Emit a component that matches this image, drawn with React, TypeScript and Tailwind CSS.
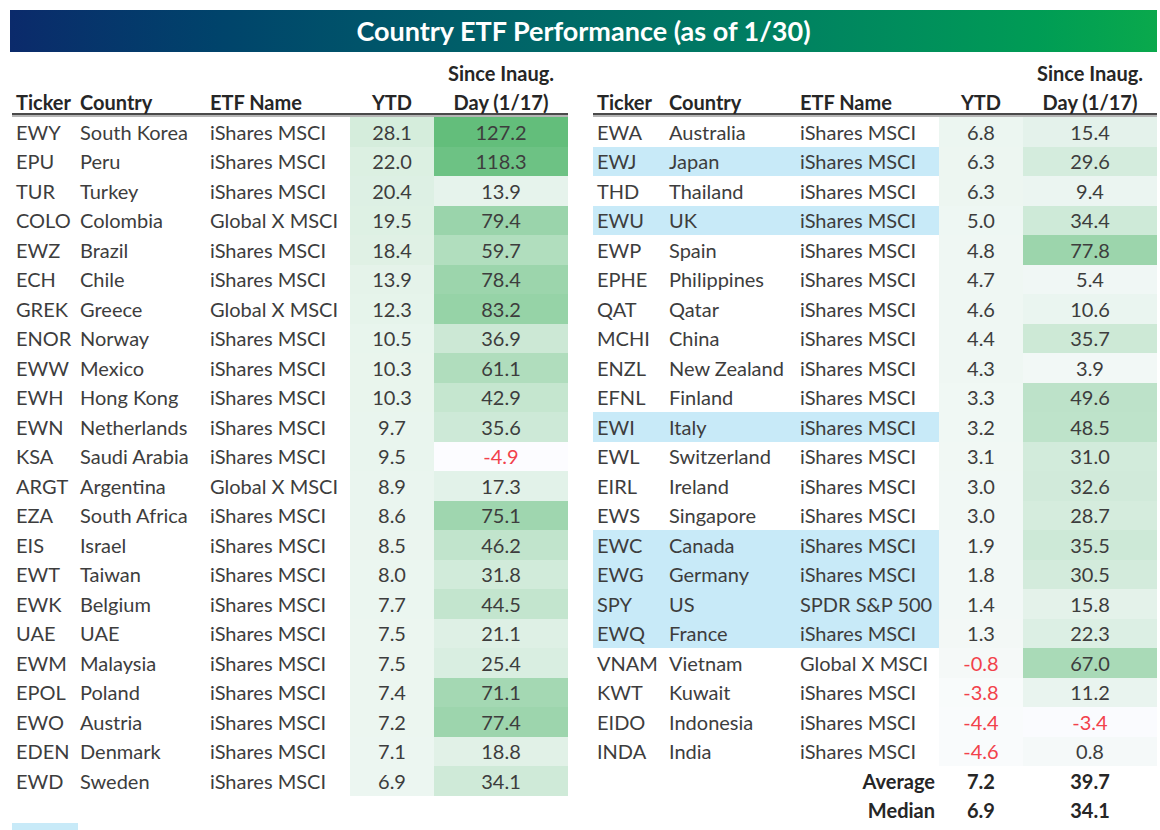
type Row = [string, string, string, number, number, boolean?]

const leftRows: Row[] = [
  ['EWY', 'South Korea', 'iShares MSCI', 28.1, 127.2],
  ['EPU', 'Peru', 'iShares MSCI', 22.0, 118.3],
  ['TUR', 'Turkey', 'iShares MSCI', 20.4, 13.9],
  ['COLO', 'Colombia', 'Global X MSCI', 19.5, 79.4],
  ['EWZ', 'Brazil', 'iShares MSCI', 18.4, 59.7],
  ['ECH', 'Chile', 'iShares MSCI', 13.9, 78.4],
  ['GREK', 'Greece', 'Global X MSCI', 12.3, 83.2],
  ['ENOR', 'Norway', 'iShares MSCI', 10.5, 36.9],
  ['EWW', 'Mexico', 'iShares MSCI', 10.3, 61.1],
  ['EWH', 'Hong Kong', 'iShares MSCI', 10.3, 42.9],
  ['EWN', 'Netherlands', 'iShares MSCI', 9.7, 35.6],
  ['KSA', 'Saudi Arabia', 'iShares MSCI', 9.5, -4.9],
  ['ARGT', 'Argentina', 'Global X MSCI', 8.9, 17.3],
  ['EZA', 'South Africa', 'iShares MSCI', 8.6, 75.1],
  ['EIS', 'Israel', 'iShares MSCI', 8.5, 46.2],
  ['EWT', 'Taiwan', 'iShares MSCI', 8.0, 31.8],
  ['EWK', 'Belgium', 'iShares MSCI', 7.7, 44.5],
  ['UAE', 'UAE', 'iShares MSCI', 7.5, 21.1],
  ['EWM', 'Malaysia', 'iShares MSCI', 7.5, 25.4],
  ['EPOL', 'Poland', 'iShares MSCI', 7.4, 71.1],
  ['EWO', 'Austria', 'iShares MSCI', 7.2, 77.4],
  ['EDEN', 'Denmark', 'iShares MSCI', 7.1, 18.8],
  ['EWD', 'Sweden', 'iShares MSCI', 6.9, 34.1],
]

const rightRows: Row[] = [
  ['EWA', 'Australia', 'iShares MSCI', 6.8, 15.4],
  ['EWJ', 'Japan', 'iShares MSCI', 6.3, 29.6, true],
  ['THD', 'Thailand', 'iShares MSCI', 6.3, 9.4],
  ['EWU', 'UK', 'iShares MSCI', 5.0, 34.4, true],
  ['EWP', 'Spain', 'iShares MSCI', 4.8, 77.8],
  ['EPHE', 'Philippines', 'iShares MSCI', 4.7, 5.4],
  ['QAT', 'Qatar', 'iShares MSCI', 4.6, 10.6],
  ['MCHI', 'China', 'iShares MSCI', 4.4, 35.7],
  ['ENZL', 'New Zealand', 'iShares MSCI', 4.3, 3.9],
  ['EFNL', 'Finland', 'iShares MSCI', 3.3, 49.6],
  ['EWI', 'Italy', 'iShares MSCI', 3.2, 48.5, true],
  ['EWL', 'Switzerland', 'iShares MSCI', 3.1, 31.0],
  ['EIRL', 'Ireland', 'iShares MSCI', 3.0, 32.6],
  ['EWS', 'Singapore', 'iShares MSCI', 3.0, 28.7],
  ['EWC', 'Canada', 'iShares MSCI', 1.9, 35.5, true],
  ['EWG', 'Germany', 'iShares MSCI', 1.8, 30.5, true],
  ['SPY', 'US', 'SPDR S&P 500', 1.4, 15.8, true],
  ['EWQ', 'France', 'iShares MSCI', 1.3, 22.3, true],
  ['VNAM', 'Vietnam', 'Global X MSCI', -0.8, 67.0],
  ['KWT', 'Kuwait', 'iShares MSCI', -3.8, 11.2],
  ['EIDO', 'Indonesia', 'iShares MSCI', -4.4, -3.4],
  ['INDA', 'India', 'iShares MSCI', -4.6, 0.8],
]

// colour scales (Excel style white -> green)
function mix(a: number[], b: number[], t: number) {
  const c = a.map((v, i) => Math.round(v + (b[i] - v) * Math.max(0, Math.min(1, t))))
  return `rgb(${c[0]}, ${c[1]}, ${c[2]})`
}
const sinceBg = (v: number) => mix([252, 252, 255], [99, 190, 123], (v + 4.9) / 132.1)
const ytdBg = (v: number) => mix([249, 251, 252], [213, 237, 220], (v + 4.6) / 32.7)

type Cols = { ticker: string; country: string; etf: string; ytd: string; since: string; lead: string }

const leftCols: Cols = {
  ticker: 'w-[68px] pl-[4px]',
  country: 'w-[130px]',
  etf: 'w-[140px]',
  ytd: 'w-[84px]',
  since: 'w-[134px]',
  lead: 'w-[338px]',
}
const rightCols: Cols = {
  ticker: 'w-[76px] pl-[4px]',
  country: 'w-[131px]',
  etf: 'w-[139px]',
  ytd: 'w-[84px]',
  since: 'w-[134px]',
  lead: 'w-[346px]',
}

function Num({ v }: { v: number }) {
  return <span className={v < 0 ? 'text-[#f2414b]' : ''}>{v.toFixed(1)}</span>
}

function Table({ rows, cols, summary }: { rows: Row[]; cols: Cols; summary?: boolean }) {
  return (
    <div>
      {/* Header */}
      <div className="flex items-end h-[61px] font-bold text-[#262626] text-[20px] leading-[22px]">
        <div className={cols.ticker}>Ticker</div>
        <div className={cols.country}>Country</div>
        <div className={cols.etf}>ETF Name</div>
        <div className={`${cols.ytd} text-center`}>YTD</div>
        <div className={`${cols.since} text-center`}>
          <div className="mb-[7px]">Since Inaug.</div>
          <div>Day (1/17)</div>
        </div>
      </div>
      <div className="h-[2px] bg-[#4a4a4a]" />
      <div className="h-[2px] bg-[#b5b5b5]" />

      {rows.map(([ticker, country, etf, ytd, since, g7]) => (
        <div key={ticker} className="flex h-[29.5px] items-center text-[20px]">
          <div className={`${cols.ticker} h-full flex items-center ${g7 ? 'bg-[#c8eaf8]' : ''}`}>{ticker}</div>
          <div className={`${cols.country} h-full flex items-center ${g7 ? 'bg-[#c8eaf8]' : ''}`}>{country}</div>
          <div className={`${cols.etf} h-full flex items-center ${g7 ? 'bg-[#c8eaf8]' : ''}`}>{etf}</div>
          <div className={`${cols.ytd} h-full flex items-center justify-center`} style={{ backgroundColor: ytdBg(ytd) }}>
            <Num v={ytd} />
          </div>
          <div className={`${cols.since} h-full flex items-center justify-center`} style={{ backgroundColor: sinceBg(since) }}>
            <Num v={since} />
          </div>
        </div>
      ))}

      {summary && (
        <>
          <div className="flex h-[29.5px] items-center text-[20px] font-bold text-[#262626]">
            <div className={`${cols.lead} text-right pr-[4px]`}>Average</div>
            <div className={`${cols.ytd} text-center`}>7.2</div>
            <div className={`${cols.since} text-center`}>39.7</div>
          </div>
          <div className="flex h-[29.5px] items-center text-[20px] font-bold text-[#262626]">
            <div className={`${cols.lead} text-right pr-[4px]`}>Median</div>
            <div className={`${cols.ytd} text-center`}>6.9</div>
            <div className={`${cols.since} text-center`}>34.1</div>
          </div>
        </>
      )}
    </div>
  )
}

export default function App() {
  return (
    <div className="w-[1160px] h-[830px] overflow-hidden bg-white text-[#3d3d3d] font-['Lato',sans-serif]">
      <div className="ml-[10px] mt-[10px] w-[1147px] h-[42px] bg-linear-to-r from-[#0b2a6b] to-[#0aa94c] flex items-center justify-center text-white font-bold text-[27px]">
        Country ETF Performance (as of 1/30)
      </div>
      <div className="flex ml-[12px] gap-[25px]">
        <div>
          <Table rows={leftRows} cols={leftCols} />
          {/* G7 legend swatch */}
          <div className="mt-[27px] w-[66px] h-[24px] bg-[#c8eaf8]" />
        </div>
        <Table rows={rightRows} cols={rightCols} summary />
      </div>
    </div>
  )
}
